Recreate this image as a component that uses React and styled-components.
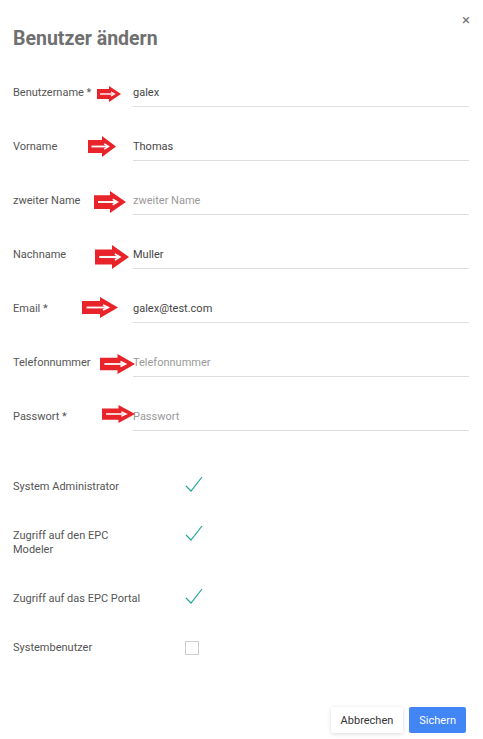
import React from 'react'
import styled, { createGlobalStyle } from 'styled-components'

const GlobalStyle = createGlobalStyle`
  body {
    margin: 0;
    background: #fff;
    font-family: Roboto, "Liberation Sans", sans-serif;
  }
`

const fields = [
  { label: 'Benutzername *', value: 'galex', arrow: [84, 8, 24, 16] },
  { label: 'Vorname', value: 'Thomas', arrow: [75, 4, 28, 21] },
  { label: 'zweiter Name', placeholder: 'zweiter Name', arrow: [81, 5, 32, 22] },
  { label: 'Nachname', value: 'Muller', arrow: [82, 5, 34, 24] },
  { label: 'Email *', value: 'galex@test.com', arrow: [69, 3, 36, 21] },
  { label: 'Telefonnummer', placeholder: 'Telefonnummer', arrow: [87, 6, 35, 20] },
  { label: 'Passwort *', placeholder: 'Passwort', arrow: [89, 3, 33, 18] },
]

const flags = [
  { label: 'System Administrator', checked: true },
  { label: 'Zugriff auf den EPC Modeler', checked: true },
  { label: 'Zugriff auf das EPC Portal', checked: true },
  { label: 'Systembenutzer', checked: false },
]

function Arrow({ box }) {
  const [left, top, w, h] = box
  return (
    <ArrowMark style={{ left, top, width: w, height: h }} viewBox="0 0 24 16" preserveAspectRatio="none">
      <polygon points="0,3 12,3 12,0 24,8 12,16 12,13 0,13" fill="#e8232a" />
      <polyline points="3,8 17,8" stroke="#fff" strokeWidth="1.4" fill="none" />
      <polyline points="14,6 17.5,8 14,10" stroke="#fff" strokeWidth="1.2" fill="none" />
    </ArrowMark>
  )
}

function Check() {
  return (
    <svg width="18" height="18" viewBox="0 0 18 18">
      <polyline points="1,11 6,16 17,2" fill="none" stroke="#26a69a" strokeWidth="1.2" />
    </svg>
  )
}

function App() {
  return (
    <Dialog>
      <GlobalStyle />
      <Close>×</Close>
      <Title>Benutzer ändern</Title>
      <Form>
        {fields.map((f) => (
          <FieldRow key={f.label}>
            <Label>{f.label}</Label>
            <Input defaultValue={f.value} placeholder={f.placeholder} readOnly />
            <Arrow box={f.arrow} />
          </FieldRow>
        ))}
      </Form>
      <Flags>
        {flags.map((f) => (
          <FlagRow key={f.label}>
            <FlagLabel>{f.label}</FlagLabel>
            <FlagBox>{f.checked ? <Check /> : <EmptyBox />}</FlagBox>
          </FlagRow>
        ))}
      </Flags>
      <Footer>
        <Button>Abbrechen</Button>
        <Button $primary>Sichern</Button>
      </Footer>
    </Dialog>
  )
}

const Dialog = styled.div`
  position: relative;
  width: 483px;
  height: 739px;
  box-sizing: border-box;
  padding: 26px 14px 0 13px;
  display: flex;
  flex-direction: column;
`

const Close = styled.div`
  position: absolute;
  top: 10px;
  right: 13px;
  font-size: 15px;
  color: #777;
  line-height: 20px;
`

const Title = styled.h1`
  margin: 0;
  font-size: 19.5px;
  font-weight: 700;
  color: #707070;
  line-height: 26px;
`

const Form = styled.div`
  margin-top: 26px;
  display: flex;
  flex-direction: column;
  gap: 25px;
`

const FieldRow = styled.div`
  position: relative;
  display: flex;
  align-items: center;
  height: 29px;
`

const Label = styled.div`
  width: 120px;
  flex-shrink: 0;
  font-size: 11px;
  color: #555;
`

const Input = styled.input`
  flex: 1;
  height: 29px;
  box-sizing: border-box;
  border: none;
  border-bottom: 1px solid #ddd;
  outline: none;
  padding: 0;
  font-family: Roboto, "Liberation Sans", sans-serif;
  font-size: 11px;
  color: #444;
  background: transparent;
  &::placeholder {
    color: #999;
  }
`

const ArrowMark = styled.svg`
  position: absolute;
`

const Flags = styled.div`
  margin-top: 49px;
  display: flex;
  flex-direction: column;
  gap: 35px;
`

const FlagRow = styled.div`
  display: flex;
  align-items: flex-start;
`

const FlagLabel = styled.div`
  width: 130px;
  margin-right: 42px;
  font-size: 11px;
  line-height: 14px;
  color: #555;
`

const FlagBox = styled.div`
  width: 18px;
  height: 18px;
  margin-top: -5px;
`

const EmptyBox = styled.div`
  width: 14px;
  height: 14px;
  box-sizing: border-box;
  border: 1px solid #ccc;
  margin-top: 5px;
`

const Footer = styled.div`
  margin-top: auto;
  margin-bottom: 6px;
  margin-right: 3px;
  display: flex;
  justify-content: flex-end;
  gap: 6px;
`

const Button = styled.button`
  height: 26px;
  padding: 0 10px;
  border: none;
  border-radius: 2px;
  font-family: Roboto, "Liberation Sans", sans-serif;
  font-size: 11px;
  cursor: pointer;
  background: ${(p) => (p.$primary ? '#4285f4' : '#fff')};
  color: ${(p) => (p.$primary ? '#fff' : '#333')};
  box-shadow: ${(p) => (p.$primary ? 'none' : '0 1px 4px rgba(0,0,0,0.15)')};
`

export default App
